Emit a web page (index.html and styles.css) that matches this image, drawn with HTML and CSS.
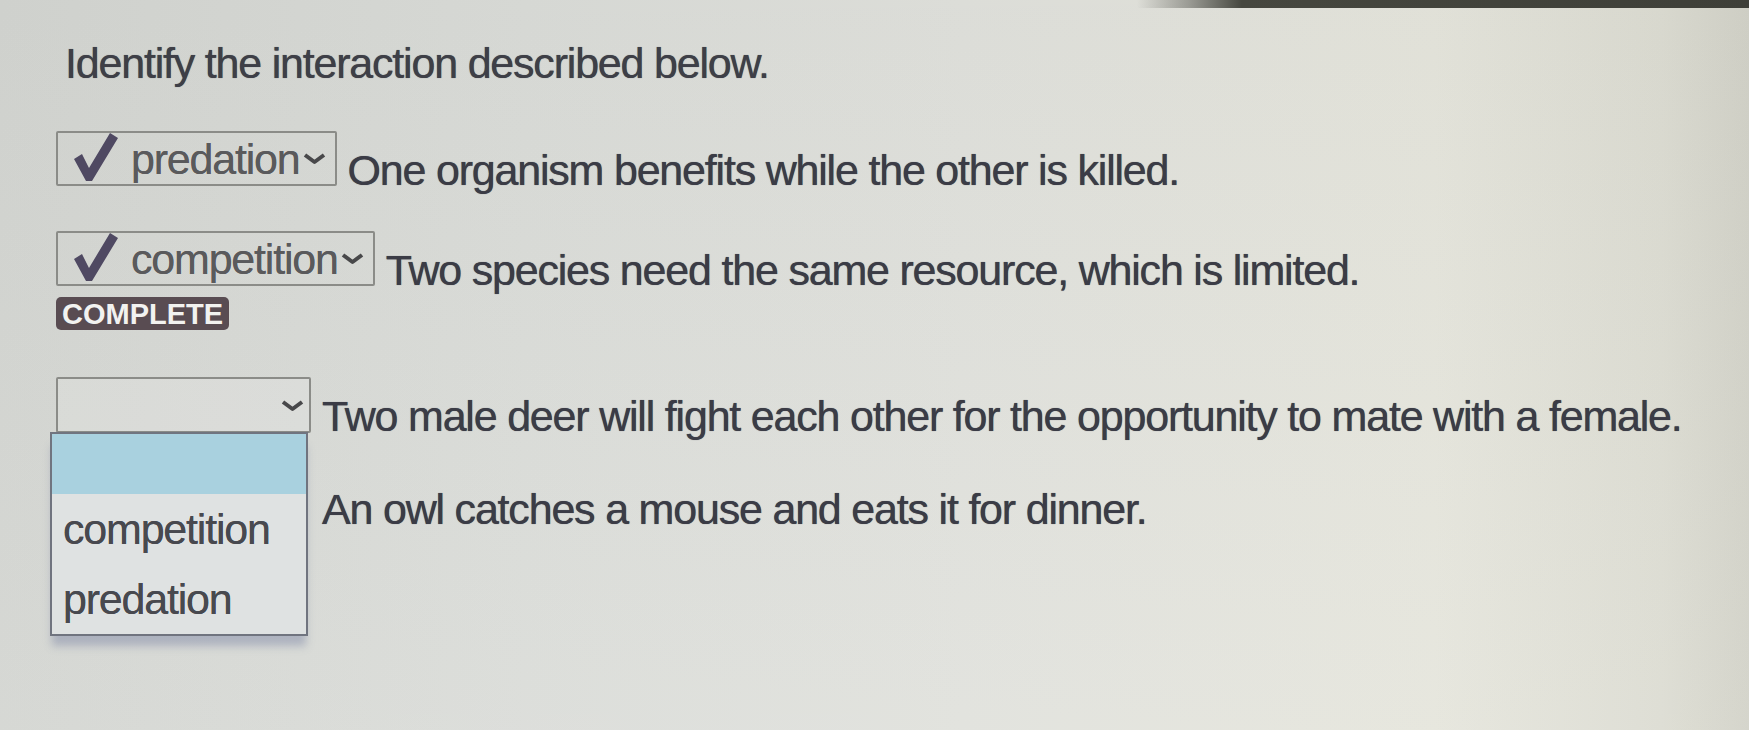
FILE: index.html
```html
<!DOCTYPE html>
<html lang="en">
<head>
<meta charset="utf-8">
<title>Identify the interaction</title>
<link rel="stylesheet" href="styles.css">
</head>
<body>
<div class="bezel"></div>
<main class="quiz">
  <h1 class="prompt">Identify the interaction described below.</h1>

  <div class="row row-first">
    <div class="select answered">
      <svg class="check" viewBox="0 0 44 48" aria-hidden="true"><polygon points="0,26 8,21 15,35 36,0 44,5 18,48 12,48"/></svg>
      <span class="value">predation</span>
      <svg class="chev" viewBox="0 0 25 13" aria-hidden="true"><polyline points="3,3 12.5,10 22,3"/></svg>
    </div>
    <p class="desc">One organism benefits while the other is killed.</p>
  </div>

  <div class="row">
    <div class="select answered">
      <svg class="check" viewBox="0 0 44 48" aria-hidden="true"><polygon points="0,26 8,21 15,35 36,0 44,5 18,48 12,48"/></svg>
      <span class="value">competition</span>
      <svg class="chev" viewBox="0 0 25 13" aria-hidden="true"><polyline points="3,3 12.5,10 22,3"/></svg>
    </div>
    <p class="desc">Two species need the same resource, which is limited.</p>
  </div>

  <div class="badge">COMPLETE</div>

  <div class="row row-open">
    <div class="select empty open">
      <svg class="chev" viewBox="0 0 25 13" aria-hidden="true"><polyline points="3,3 12.5,10 22,3"/></svg>
      <ul class="listbox">
        <li class="option blank highlighted"></li>
        <li class="option">competition</li>
        <li class="option">predation</li>
      </ul>
    </div>
    <p class="desc">Two male deer will fight each other for the opportunity to mate with a female.</p>
  </div>

  <div class="row row-last">
    <div class="select empty covered">
      <svg class="chev" viewBox="0 0 25 13" aria-hidden="true"><polyline points="3,3 12.5,10 22,3"/></svg>
    </div>
    <p class="desc">An owl catches a mouse and eats it for dinner.</p>
  </div>
</main>
</body>
</html>
```

FILE: styles.css
```css
html, body {
  margin: 0;
  padding: 0;
}

body {
  width: 1749px;
  height: 730px;
  overflow: hidden;
  font-family: "Liberation Sans", Arial, sans-serif;
  color: #3b3c46;
  background:
    linear-gradient(180deg, rgba(0, 0, 0, 0.02) 0%, rgba(255, 255, 255, 0.07) 100%),
    linear-gradient(90deg, #d3d5d1 0%, #dadcd8 30%, #e0e1dc 55%, #e5e5dc 82%, #dcdcd2 95%, #d2d2c8 100%);
}

/* dark frame edge along the top */
.bezel {
  height: 8px;
  background: linear-gradient(90deg, transparent 0, transparent 65%, rgba(70, 71, 64, 0.45) 68%, #46473f 71%, #3e3f38 100%);
}

.quiz {
  padding: 31px 0 0 56px;
}

.prompt {
  margin: 0;
  padding-left: 9px;
  font-size: 43px;
  line-height: 48px;
  font-weight: normal;
  letter-spacing: -1.2px;
  color: #3e3f47;
  text-shadow: 0 0 0.7px currentColor;
}

.row {
  display: flex;
  align-items: flex-start;
  gap: 11px;
  margin-top: 37px;
}

.row-first {
  margin-top: 44px;
}

.select {
  position: relative;
  box-sizing: border-box;
  height: 55px;
  display: flex;
  align-items: center;
  border: 2px solid #8b8c88;
  border-radius: 2px;
  font-size: 43px;
  line-height: 48px;
  letter-spacing: -1.2px;
  color: #5a5a5c;
  text-shadow: 0 0 0.6px currentColor;
}

.select.answered {
  padding: 0 8px 0 16px;
}

.select.empty {
  width: 255px;
  height: 56px;
  justify-content: flex-end;
  padding-right: 4px;
  background: rgba(255, 255, 255, 0.12);
}

/* the fourth select sits under the open list */
.select.covered {
  visibility: hidden;
}

.check {
  width: 44px;
  height: 48px;
  margin-right: 13px;
  margin-top: -4px;
  fill: #4f4962;
}

.chev {
  width: 25px;
  height: 13px;
  margin-left: 2px;
  fill: none;
  stroke: #48484a;
  stroke-width: 4;
  stroke-linejoin: round;
}

.desc {
  margin: 15px 0 0;
  font-size: 43px;
  line-height: 48px;
  letter-spacing: -1.2px;
  white-space: nowrap;
  text-shadow: 0 0 0.7px currentColor;
}

.badge {
  width: fit-content;
  margin-top: 3px;
  height: 33px;
  padding: 0 6px;
  border-radius: 5px;
  background: #594c52;
  color: #f2f2f0;
  font-size: 29px;
  line-height: 34px;
  font-weight: bold;
}

.badge + .row {
  margin-top: 47px;
}

.row-last {
  margin-top: 30px;
}

/* open option list under the third select */
.listbox {
  position: absolute;
  left: -8px;
  top: 53px;
  z-index: 2;
  width: 258px;
  box-sizing: border-box;
  margin: 0;
  padding: 0;
  list-style: none;
  border: 2px solid #70747f;
  background: #dfe2e2;
  box-shadow: 0 12px 8px -2px rgba(95, 105, 150, 0.35);
}

.option {
  height: 70px;
  padding-left: 11px;
  line-height: 70px;
  color: #48494f;
  letter-spacing: -1.2px;
}

.option.blank {
  height: 60px;
}

.option.highlighted {
  background: #a9d1df;
}
```
